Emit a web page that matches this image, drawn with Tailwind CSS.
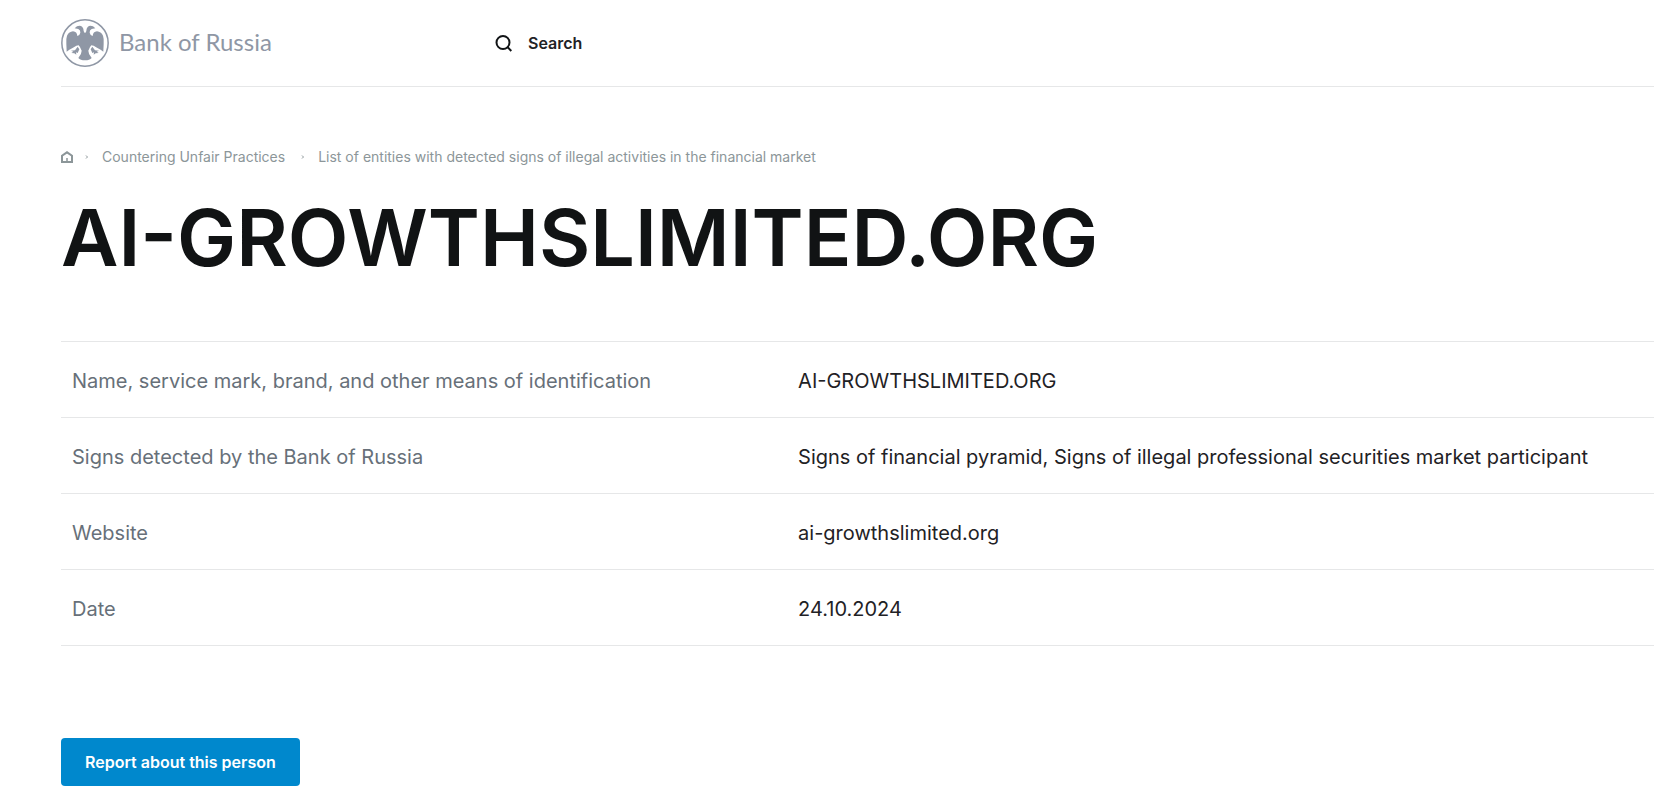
<!DOCTYPE html>
<html lang="en">
<head>
    <meta charset="UTF-8">
    <meta name="viewport" content="width=device-width, initial-scale=1.0">
    <script src="https://cdn.jsdelivr.net/npm/@tailwindcss/browser@4"></script>
    <title>AI-GROWTHSLIMITED.ORG | Bank of Russia</title>
</head>
<body class="bg-white font-['Inter',sans-serif] text-[#1f2225]">
    <div class="pl-[61px]">
        <header class="flex items-center h-[87px] border-b border-[#e6e7e8]">
            <a href="#" class="flex items-center gap-[10px] w-[434px] text-[#8f97a5]">
                <svg class="size-12" viewBox="0 0 144 144" fill="currentColor" aria-hidden="true">
                    <circle cx="72" cy="72" r="69.500" fill="none" stroke="currentColor" stroke-width="4.500"/>
                    <!-- heads, wings and body -->
                    <path d="M41 28 L48 22 Q58 18 64 24 Q68 29 68 36 Q69 41 72 42 Q75 41 76 36 Q76 29 80 24 Q86 18 96 22 L103 28 L92 30 Q85 33 86 41 Q88 50 95 51 Q96 38 108 37 Q120 38 126 50 Q129 58 128 74 L127 98 L119 92 L108 86 L98 80 L91 79 Q86 84 82 95 Q82 106 92 117 Q86 124 72 124 Q58 124 52 117 Q62 106 62 95 Q58 84 53 79 L46 80 L36 86 L25 92 L17 98 L16 74 Q15 58 18 50 Q24 38 36 37 Q48 38 49 51 Q56 50 58 41 Q59 33 52 30 Z"/>
                    <!-- claws -->
                    <path d="M50 83 L55 91 L50 102 L45 100 L46 107 L40 103 L31 102 L37 98 L30 95 L42 94 Z M94 83 L89 91 L94 102 L99 100 L98 107 L104 103 L113 102 L107 98 L114 95 L102 94 Z"/>
                </svg>
                <span class="pb-[2px] font-['Lato',sans-serif] text-2xl">Bank of Russia</span>
            </a>
            <button type="button" class="flex items-center gap-4 font-semibold">
                <svg class="size-[17px]" viewBox="0 0 17 17" fill="none" stroke="#111416" stroke-width="2" aria-hidden="true">
                    <circle cx="8" cy="7.500" r="6.500"/>
                    <path d="M12.400 12 L16.300 16"/>
                </svg>
                Search
            </button>
        </header>

        <main>
            <nav class="flex items-center mt-[60px] text-sm text-[#8c9699]" aria-label="Breadcrumb">
                <a href="#" aria-label="Home">
                    <svg class="size-3" viewBox="0 0 12 12" fill="none" stroke="currentColor" stroke-width="2" aria-hidden="true">
                        <path d="M1 11 V4.700 L6 1.300 L11 4.700 V11 Z"/>
                        <path d="M6 7 V10" stroke-width="1.500"/>
                    </svg>
                </a>
                <svg class="size-1 ml-3 mr-[13px]" viewBox="0 0 4 4" fill="none" stroke="currentColor" aria-hidden="true"><path d="M1 0.500 L2.500 2 L1 3.500"/></svg>
                <a href="#">Countering Unfair Practices</a>
                <svg class="size-1 ml-4 mr-[13px]" viewBox="0 0 4 4" fill="none" stroke="currentColor" aria-hidden="true"><path d="M1 0.500 L2.500 2 L1 3.500"/></svg>
                <a href="#">List of entities with detected signs of illegal activities in the financial market</a>
            </nav>

            <h1 class="mt-[30px] text-[79px] leading-[80px] font-semibold text-[#111314]">AI-GROWTHSLIMITED.ORG</h1>

            <table class="w-full mt-16 border-t border-[#e6e7e8] text-xl text-left">
                <tbody>
                    <tr class="h-[76px] border-b border-[#e6e7e8]">
                        <th scope="row" class="w-5/11 pl-[11px] pt-[2px] font-normal text-[#677079]">Name, service mark, brand, and other means of identification</th>
                        <td class="pl-[13px] pt-[2px]">AI-GROWTHSLIMITED.ORG</td>
                    </tr>
                    <tr class="h-[76px] border-b border-[#e6e7e8]">
                        <th scope="row" class="pl-[11px] pt-[2px] font-normal text-[#677079]">Signs detected by the Bank of Russia</th>
                        <td class="pl-[13px] pt-[2px]">Signs of financial pyramid, Signs of illegal professional securities market participant</td>
                    </tr>
                    <tr class="h-[76px] border-b border-[#e6e7e8]">
                        <th scope="row" class="pl-[11px] pt-[2px] font-normal text-[#677079]">Website</th>
                        <td class="pl-[13px] pt-[2px]">ai-growthslimited.org</td>
                    </tr>
                    <tr class="h-[76px] border-b border-[#e6e7e8]">
                        <th scope="row" class="pl-[11px] pt-[2px] font-normal text-[#677079]">Date</th>
                        <td class="pl-[13px] pt-[2px]">24.10.2024</td>
                    </tr>
                </tbody>
            </table>

            <button type="button" class="mt-[92px] h-12 px-6 rounded bg-[#0088cd] font-semibold text-white">Report about this person</button>
        </main>
    </div>
</body>
</html>
